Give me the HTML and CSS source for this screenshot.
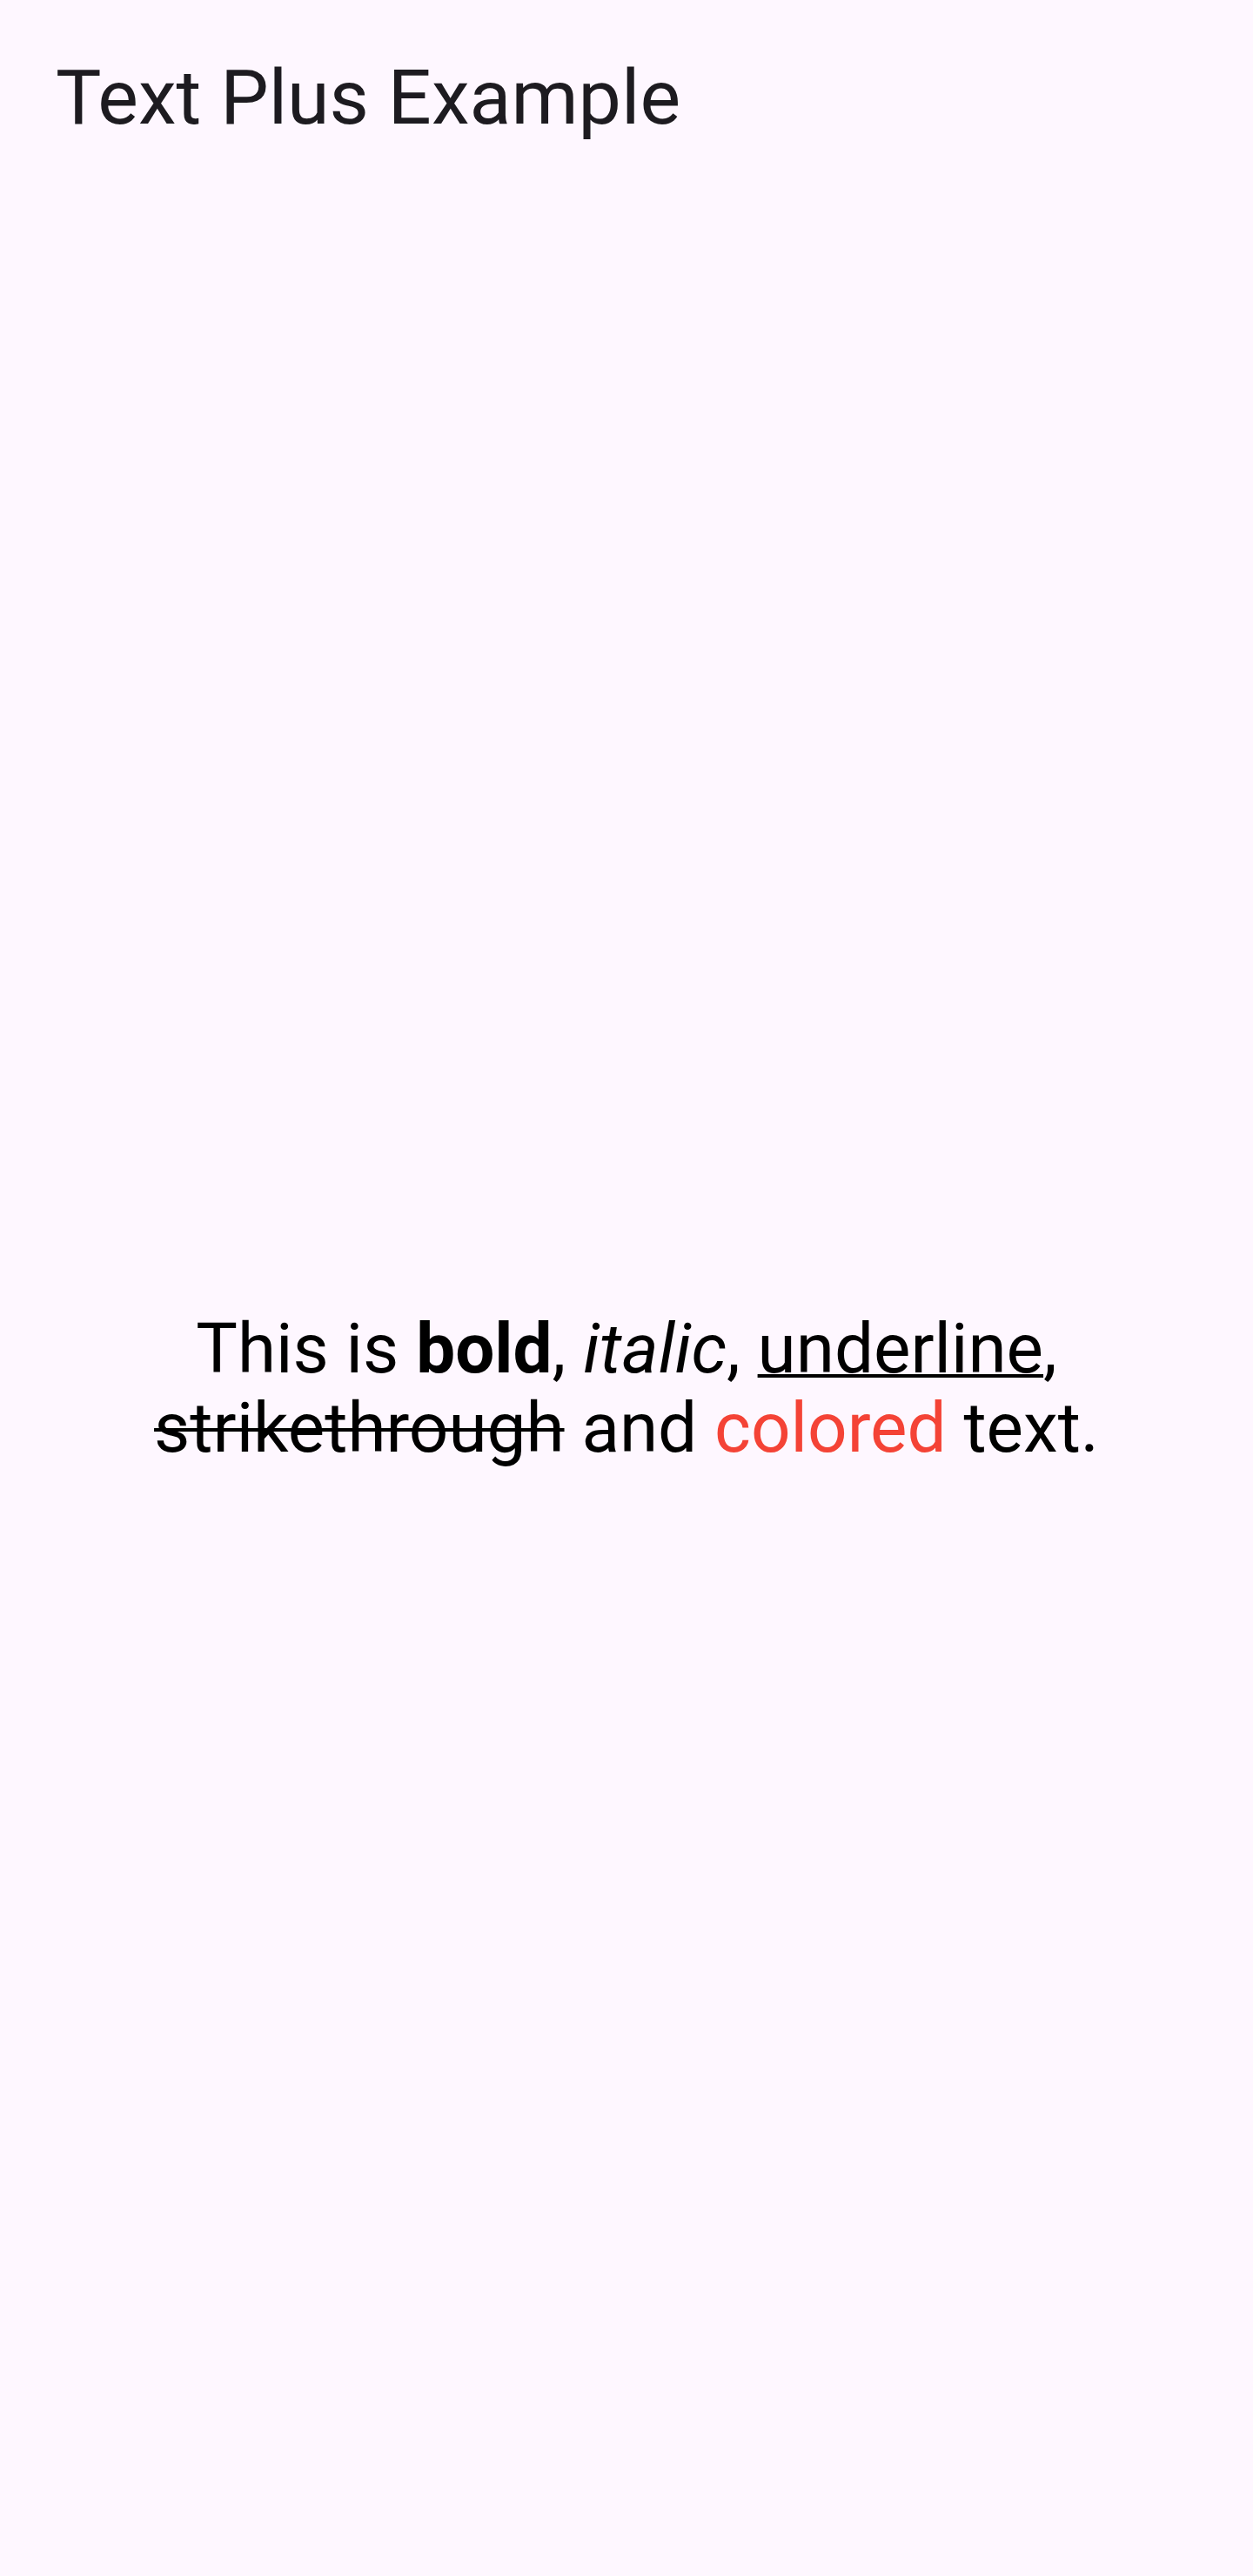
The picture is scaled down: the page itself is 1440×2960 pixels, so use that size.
FILE: index.html
```html
<!DOCTYPE html>
<html>
<head>
<meta charset="utf-8">
<link rel="stylesheet" href="styles.css">
</head>
<body>
<div class="screen">
  <header class="appbar">
    <h1 class="title">Text Plus Example</h1>
  </header>
  <main class="content">
    <p class="rich">This is <b class="bold">bold</b>, <i class="italic">italic</i>, <span class="underline">underline</span>, <span class="strike">strikethrough</span> and <span class="red">colored</span> text.</p>
  </main>
</div>
</body>
</html>
```
FILE: styles.css
```css
html, body {
  margin: 0;
  padding: 0;
  background: #FEF7FF;
}
.screen {
  width: 1440px;
  height: 2960px;
  display: flex;
  flex-direction: column;
  font-family: Roboto, "Noto Sans", sans-serif;
}
.appbar {
  height: 224px;
  display: flex;
  align-items: center;
  padding: 0 64px;
  flex-shrink: 0;
}
.title {
  margin: 0;
  font-size: 88px;
  font-weight: 400;
  line-height: 112px;
  color: #1D1B20;
}
.content {
  flex: 1;
  display: flex;
  align-items: center;
  justify-content: center;
  padding: 8px 64px 0;
}
.rich {
  margin: 0;
  text-align: center;
  font-size: 80px;
  line-height: 91px;
  color: #000;
}
.bold { font-weight: 700; }
.italic { font-style: italic; }
.underline {
  text-decoration: underline;
  text-decoration-thickness: 4px;
  text-underline-offset: 2px;
}
.strike { text-decoration: line-through; text-decoration-thickness: 4px; }
.red { color: #F44336; }
```
